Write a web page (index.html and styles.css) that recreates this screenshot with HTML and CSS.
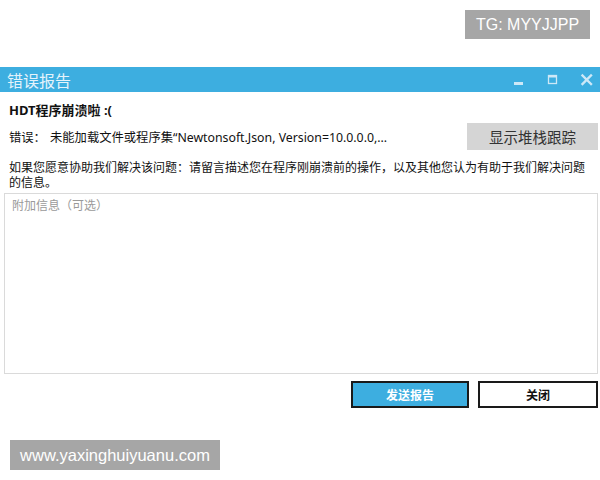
FILE: index.html
```html
<!DOCTYPE html>
<html lang="zh-CN">
<head>
<meta charset="utf-8">
<title>错误报告</title>
<link rel="stylesheet" href="styles.css">
</head>
<body>
<div class="top">
  <div class="badge badge-tg">TG: MYYJJPP</div>
</div>
<div class="window">
  <div class="titlebar">
    <span class="title">错误报告</span>
    <div class="controls">
      <svg class="ctl" width="14" height="14" viewBox="0 0 14 14"><rect x="2" y="9" width="9" height="3" fill="#cde8f7"/></svg>
      <svg class="ctl" width="14" height="14" viewBox="0 0 14 14"><rect x="2.5" y="2.5" width="8" height="8" fill="none" stroke="#cde8f7" stroke-width="1.3"/><rect x="2" y="2" width="9" height="2.5" fill="#cde8f7"/></svg>
      <svg class="ctl" width="14" height="14" viewBox="0 0 14 14"><path d="M2.5 2.5 L11 11 M11 2.5 L2.5 11" stroke="#cde8f7" stroke-width="2.4" stroke-linecap="square"/></svg>
    </div>
  </div>
  <div class="content">
    <div class="heading">HDT程序崩溃啦 :(</div>
    <div class="error-row">
      <div class="error-text"><span class="label">错误：</span><span class="msg">未能加载文件或程序集“Newtonsoft.Json, Version=10.0.0.0,...</span></div>
      <button class="btn-gray">显示堆栈跟踪</button>
    </div>
    <p class="desc">如果您愿意协助我们解决该问题：请留言描述您在程序刚崩溃前的操作，以及其他您认为有助于我们解决问题的信息。</p>
    <textarea class="info" placeholder="附加信息（可选）"></textarea>
    <div class="actions">
      <button class="btn btn-send">发送报告</button>
      <button class="btn btn-close">关闭</button>
    </div>
  </div>
</div>
<div class="bottom">
  <div class="badge badge-site">www.yaxinghuiyuanu.com</div>
</div>
</body>
</html>
```
FILE: styles.css
```css
* { box-sizing: border-box; }
body {
  margin: 0;
  background: #fff;
  font-family: "Noto Sans", "Noto Sans CJK SC", sans-serif;
  color: #111;
}
.top {
  height: 67px;
  display: flex;
  justify-content: flex-end;
  align-items: flex-start;
  padding: 10px 10px 0 0;
}
.badge {
  background: #a6a6a6;
  color: #fff;
  font-family: "Liberation Sans", Arial, sans-serif;
  font-size: 16px;
  display: flex;
  align-items: center;
  justify-content: center;
}
.badge-tg { width: 125px; height: 29px; }
.titlebar {
  height: 25px;
  background: #3daee0;
  display: flex;
  align-items: center;
  justify-content: space-between;
  padding: 0 6px 0 7px;
}
.title {
  color: #e4f3fb;
  font-family: "Noto Sans CJK SC", sans-serif;
  font-size: 16px;
  line-height: 20px;
}
.controls {
  display: flex;
  gap: 20px;
  align-items: center;
}
.ctl { display: block; }
.content {
  padding: 11px 2px 0 4px;
}
.heading {
  font-family: "Noto Sans", "Noto Sans CJK SC", sans-serif;
  font-weight: bold;
  font-size: 13px;
  line-height: 15px;
  padding-left: 5px;
}
.error-row {
  margin-top: 5px;
  height: 27px;
  display: flex;
  align-items: center;
  justify-content: space-between;
}
.error-text {
  font-size: 12.3px;
  padding-left: 5px;
  display: flex;
}
.label { width: 41px; }
.btn-gray {
  width: 131px;
  height: 27px;
  border: none;
  background: #d5d5d5;
  color: #333;
  font-family: "Noto Sans CJK SC", sans-serif;
  font-size: 14.5px;
  padding: 0;
}
.desc {
  margin: 9px 0 0 0;
  padding: 0 10px 0 5px;
  font-family: "Noto Sans CJK SC", sans-serif;
  font-size: 12px;
  line-height: 15px;
}
.info {
  display: block;
  margin-top: 4px;
  width: 594px;
  height: 181px;
  border: 1px solid #dadada;
  resize: none;
  padding: 2px 7px;
  font-family: "Noto Sans CJK SC", sans-serif;
  font-size: 12px;
  outline: none;
}
.info::placeholder { color: #9a9a9a; }
.actions {
  margin-top: 7px;
  display: flex;
  justify-content: flex-end;
  gap: 9px;
}
.btn {
  height: 27px;
  border: 2px solid #1a1a1a;
  font-family: "Noto Sans CJK SC", sans-serif;
  font-size: 12px;
  font-weight: bold;
  padding: 0;
}
.btn-send { width: 118px; background: #3daee0; color: #fff; }
.btn-close { width: 120px; background: #fff; color: #111; }
.bottom {
  padding: 32px 0 0 10px;
}
.badge-site { width: 210px; height: 30px; font-size: 16.5px; }
```
